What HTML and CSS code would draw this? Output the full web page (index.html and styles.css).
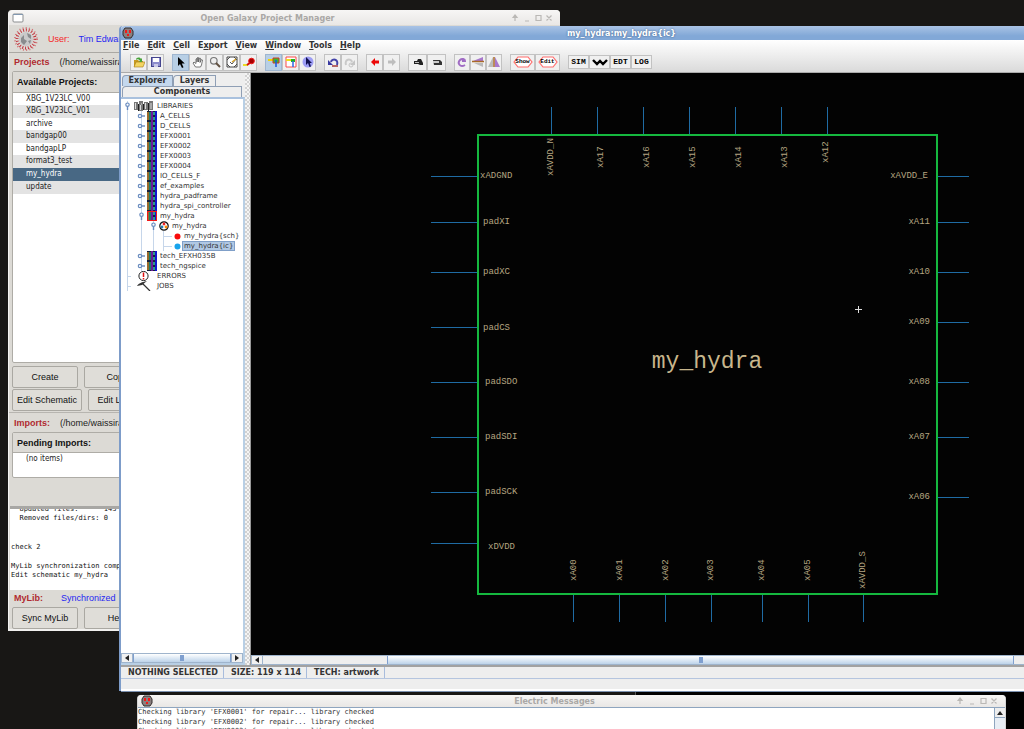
FILE: index.html
```html
<!DOCTYPE html>
<html lang="en">
<head>
<meta charset="utf-8">
<title>my_hydra:my_hydra{ic}</title>
<link rel="stylesheet" href="styles.css">
</head>
<body>
<svg class="defs" aria-hidden="true">
  <symbol id="books" viewBox="0 0 10 10"><path fill="#17203a" d="M0 0h10v10H0z"/><path fill="#9a6a2a" d="M0 1h2v8H0z"/><path fill="#1e7a6a" d="M2 1h2v8H2z"/><path fill="#6a1a9a" d="M4 0h2v10H4z"/><path fill="#2a9a8a" d="M6 1h2v3H6zM6 6h2v3H6z"/><path fill="#1414d0" d="M8 0h2v10H8z"/></symbol>
  <symbol id="shut" viewBox="0 0 8 8"><circle cx="3" cy="4" r="1.7" fill="#fff" stroke="#6a8cbf" stroke-width="1.2"/><path d="M5 4h3" stroke="#6a8cbf" stroke-width="1.4"/></symbol>
  <symbol id="open" viewBox="0 0 8 8"><circle cx="4.500" cy="2.700" r="1.700" fill="#fff" stroke="#6a8cbf" stroke-width="1.200"/><path d="M4.500 4.500V8" stroke="#6a8cbf" stroke-width="1.400"/></symbol>
  <symbol id="outlet" viewBox="0 0 12 12"><path d="M3 1h6l2 3v4L9 11H3L1 8V4z" fill="#8a7f7f" stroke="#332c2c"/><path d="M3 3h2v3H3zM7 3h2v3H7zM5 7h2v2H5z" fill="#f31818"/></symbol>
  <symbol id="controls" viewBox="0 0 44 10"><g fill="none" stroke="#bab8b5" stroke-width="1.200"><path d="M4 2v6M2 4.500l2-2.500 2 2.500zM14 8h4M25 2.500h5v5h-5zM35.500 2.500l5 5M40.500 2.500l-5 5"/></g></symbol>
  <symbol id="left" viewBox="0 0 8 8"><path d="M6 1v6L2 4z" fill="#222"/></symbol>
  <symbol id="right" viewBox="0 0 8 8"><path d="M2 1v6l4-3z" fill="#222"/></symbol>
  <symbol id="up" viewBox="0 0 8 8"><path d="M1 6h6L4 2z" fill="#222"/></symbol>
</svg>

<main class="desktop">
  <div class="screen-edge"></div>

  <section class="window manager" aria-label="Open Galaxy Project Manager">
    <header class="bar idle"><svg class="app-icon" viewBox="0 0 12 12"><rect x="1" y="2" width="10" height="8" rx="1" fill="#fff" stroke="#8b8d8f"/><path d="M1 2.500h10" stroke="#8298b0"/></svg><h1>Open Galaxy Project Manager</h1><svg class="controls"><use href="#controls"/></svg></header>
    <div class="user">
      <svg class="logo" viewBox="0 0 26 26"><g fill="none" stroke="#c0323c"><circle cx="13" cy="13" r="9" stroke-width="3" stroke-dasharray="1 1.800"/><circle cx="13" cy="13" r="11" stroke="#d27274" stroke-width="2" stroke-dasharray="1 2.200"/></g><circle cx="13" cy="13" r="7" fill="#c9c9c9"/><path d="M8 12l3-3v4l3 2-3 4-3-3zM14 7l4 2v4l-3-2zM15 15l3-1-1 4z" fill="#898b8d"/></svg>
      <span class="red">User:</span><span class="blue">Tim Edwards</span>
    </div>
    <div class="caption"><b class="brick">Projects</b><span>(/home/waissira)</span></div>
    <div class="listbox projects">
      <h2>Available Projects:</h2>
      <ul><li>XBG_1V23LC_V00</li><li>XBG_1V23LC_V01</li><li>archive</li><li>bandgap00</li><li>bandgapLP</li><li>format3_test</li><li class="chosen">my_hydra</li><li>update</li></ul>
    </div>
    <div class="buttons"><button class="std">Create</button><button class="std">Copy</button></div>
    <div class="buttons"><button>Edit Schematic</button><button>Edit Layout</button></div>
    <div class="caption ruled"><b class="brick">Imports:</b><span>(/home/waissira)</span></div>
    <div class="listbox imports">
      <h2>Pending Imports:</h2>
      <ul><li>(no items)</li></ul>
    </div>
    <div class="log"><p>  Updated files:      143</p><p>  Removed files/dirs: 0</p><p> </p><p> </p><p>check 2</p><p> </p><p>MyLib synchronization complete</p><p>Edit schematic my_hydra</p><p> </p></div>
    <div class="caption sync"><b class="brick">MyLib:</b><span class="blue">Synchronized</span></div>
    <div class="buttons"><button class="std">Sync MyLib</button><button class="std">Help</button></div>
  </section>

  <section class="window editor" aria-label="my_hydra:my_hydra{ic}">
    <header class="bar active"><svg class="app-icon"><use href="#outlet"/></svg><h1>my_hydra:my_hydra{ic}</h1></header>
    <div class="top">
      <nav class="menu"><button><u>F</u>ile</button><button><u>E</u>dit</button><button><u>C</u>ell</button><button>E<u>x</u>port</button><button><u>V</u>iew</button><button><u>W</u>indow</button><button><u>T</u>ools</button><button><u>H</u>elp</button></nav>
      <div class="toolbar" role="toolbar">
        <div class="group">
          <button aria-label="Open library"><svg viewBox="0 0 12 12"><path d="M1 4h4l1 1h4v6H1z" fill="#c79b22"/><path d="M1 11l2-5h9l-2 5z" fill="#f3d561" stroke="#a47a18" stroke-width=".600"/><path d="M3 4c0-3 4-3 5-1l1-1v4H6l1-1c-1-2-3-2-4-1z" fill="#49a33a"/></svg></button>
          <button aria-label="Save library"><svg viewBox="0 0 12 12"><rect x="1.500" y="1.500" width="9" height="9" fill="#8c8ccc" stroke="#44448e"/><path fill="#fff" d="M3 2h6v4H3z"/><path fill="#c9c9e8" d="M4 8h4v3H4z"/></svg></button>
        </div>
        <div class="group">
          <button class="on" aria-label="Select"><svg viewBox="0 0 12 12"><path d="M3 1v9l2-2 2 4 1.500-.800L6.800 7.500h3z"/></svg></button>
          <button aria-label="Pan"><svg viewBox="0 0 12 12"><path d="M3.500 11L1 7l1-1 2 1.500V3l1-.500V6l.500-4.500 1 .100V6l1-4 1 .300L8 6.500l1.500-3 1 .500-1 5-1 2z" fill="#fff" stroke="#555" stroke-width=".800"/></svg></button>
          <button aria-label="Zoom"><svg viewBox="0 0 12 12"><circle cx="4.800" cy="4.800" r="3.300" fill="#eee" stroke="#777" stroke-width="1.200"/><path d="M7 7l4 4" stroke="#605040" stroke-width="2"/></svg></button>
          <button aria-label="Outline edit"><svg viewBox="0 0 12 12"><path d="M1 1h10v10H1z" fill="#fff" stroke="#444"/><path d="M1 4l3-3M1 8l3 3M11 4L8 1M11 8l-3 3M4 6l2 2 4-5" fill="none" stroke="#444" stroke-width=".900"/><path d="M6 6l4-3" stroke="#d8a21e" stroke-width="1.200"/></svg></button>
          <button aria-label="Measure"><svg viewBox="0 0 12 12"><path d="M0 9h5" stroke="#e9dd28" stroke-width="2"/><path d="M4 9l4-3" stroke="#d41010" stroke-width="2"/><circle cx="8.500" cy="5" r="2.800" fill="#a60000" stroke="#f01515"/></svg></button>
        </div>
        <div class="group">
          <button class="on" aria-label="Select objects"><svg viewBox="0 0 12 12"><path d="M0 4h5" stroke="#f3d400" stroke-width="2"/><path d="M5 2h6v5H5z" fill="#37b837" stroke="#d43a20"/><path d="M8 4v7" stroke="#1958e0" stroke-width="1.500"/></svg></button>
          <button aria-label="Select area"><svg viewBox="0 0 12 12"><path d="M1 1h10v10H1z" fill="#fff" stroke="#fb4b4b"/><path d="M1 4h5" stroke="#ecdf18" stroke-width="2"/><path d="M6 3h4v3H6z" fill="#20b420"/><path d="M8 5v6" stroke="#3168e6" stroke-width="1.500"/></svg></button>
          <button aria-label="Special select"><svg viewBox="0 0 12 12"><circle cx="6" cy="6" r="5.500" fill="#9d9df4"/><path d="M4 1v8l2-2 1.500 4L9 10.500 7.800 7H10z" fill="#11114e"/></svg></button>
        </div>
        <div class="group">
          <button aria-label="Undo"><svg viewBox="0 0 12 12"><path d="M10 9c2-6-5-7-6-3" fill="none" stroke="#4444a8" stroke-width="2"/><path d="M1 4v5h5z" fill="#3838a0"/><path d="M5 10h6" stroke="#b05858" stroke-width="1.800"/></svg></button>
          <button aria-label="Redo"><svg viewBox="0 0 12 12"><path d="M2 9c-2-6 5-7 6-3" fill="none" stroke="#c9c9c9" stroke-width="2"/><path d="M11 4v5H6z" fill="#c4c4c4"/><circle cx="7" cy="9" r="2" fill="none" stroke="#c4c4c4"/></svg></button>
        </div>
        <div class="group">
          <button aria-label="Back"><svg viewBox="0 0 12 12"><path d="M2 6l4-4v2.500h4v3H6V10z" fill="#ec0808"/></svg></button>
          <button aria-label="Forward"><svg viewBox="0 0 12 12"><path d="M10 6L6 2v2.500H2v3h4V10z" fill="#bdbdbd"/></svg></button>
        </div>
        <div class="group pair">
          <button aria-label="Expand"><svg viewBox="0 0 12 12"><path d="M2 5h3l1-2h3l2 4v2H8L6 8H2z" fill="#222"/><path d="M3 6.500h4" stroke="#bbb"/></svg></button>
          <button aria-label="Collapse"><svg viewBox="0 0 12 12"><path d="M2 4h7l2 2v3H3z" fill="#333"/><path d="M2 5h6v2H2z" fill="#ccc"/></svg></button>
        </div>
        <div class="group slim">
          <button aria-label="Rotate"><svg viewBox="0 0 12 12"><path d="M9 9C4 12 1 7 4 4c2-2 5-1 5 1H6" fill="none" stroke="#a06cc4" stroke-width="2"/></svg></button>
          <button aria-label="Mirror vertically"><svg viewBox="0 0 12 12"><path d="M11 1v4H1z" fill="#a878cc"/><path d="M0 5.500h12" stroke="#a86a28" stroke-width="1.500"/><path d="M11 7v4L2 7z" fill="#bbb"/></svg></button>
          <button aria-label="Mirror horizontally"><svg viewBox="0 0 12 12"><path d="M5 1v10H0z" fill="#bbb"/><path d="M6 1v10" stroke="#a86a28" stroke-width="1.500"/><path d="M7 1l5 10H7z" fill="#a878cc"/></svg></button>
        </div>
        <div class="group tags">
          <button><svg viewBox="0 0 20 12"><path d="M1 6l4-5h10l4 5-4 5H5z" fill="#fff" stroke="#ff6d6d" stroke-width="1.200"/></svg><span>Show</span></button>
          <button><svg viewBox="0 0 20 12"><path d="M1 6l4-5h10l4 5-4 5H5z" fill="#fff" stroke="#ff6d6d" stroke-width="1.200"/></svg><span>Edit</span></button>
        </div>
        <div class="group words">
          <button>SIM</button>
          <button aria-label="Waveform"><svg viewBox="0 0 16 12"><path d="M1 4l4 4 3-3 3 3 4-4" fill="none" stroke="#000" stroke-width="2.400"/></svg></button>
          <button>EDT</button>
          <button>LOG</button>
        </div>
      </div>
    </div>
    <div class="work">
      <aside class="side">
        <div class="tabs">
          <button class="tab current">Explorer</button><button class="tab">Layers</button>
          <button class="tab wide">Components</button>
        </div>
        <div class="pane">
          <ul class="tree root">
            <li><div class="row"><svg class="knob"><use href="#open"/></svg><svg class="slot" viewBox="0 0 21 10"><path d="M1 1h4v8H1zM6 0h4v10H6zM11 1h4v8h-4zM16 0h4v9h-4z" fill="#777"/><path d="M2.500 2v6M8 3h1M7.500 4v5M12.500 2v6M18 2v6" stroke="#ddd"/><path d="M5.500 3v7M10.500 3v6M15.500 2v8" stroke="#222"/></svg><span>LIBRARIES</span></div>
              <ul class="tree libs">
                <li><div class="row"><svg class="knob"><use href="#shut"/></svg><svg class="ico"><use href="#books"/></svg><span>A_CELLS</span></div></li>
                <li><div class="row"><svg class="knob"><use href="#shut"/></svg><svg class="ico"><use href="#books"/></svg><span>D_CELLS</span></div></li>
                <li><div class="row"><svg class="knob"><use href="#shut"/></svg><svg class="ico"><use href="#books"/></svg><span>EFX0001</span></div></li>
                <li><div class="row"><svg class="knob"><use href="#shut"/></svg><svg class="ico"><use href="#books"/></svg><span>EFX0002</span></div></li>
                <li><div class="row"><svg class="knob"><use href="#shut"/></svg><svg class="ico"><use href="#books"/></svg><span>EFX0003</span></div></li>
                <li><div class="row"><svg class="knob"><use href="#shut"/></svg><svg class="ico"><use href="#books"/></svg><span>EFX0004</span></div></li>
                <li><div class="row"><svg class="knob"><use href="#shut"/></svg><svg class="ico"><use href="#books"/></svg><span>IO_CELLS_F</span></div></li>
                <li><div class="row"><svg class="knob"><use href="#shut"/></svg><svg class="ico"><use href="#books"/></svg><span>ef_examples</span></div></li>
                <li><div class="row"><svg class="knob"><use href="#shut"/></svg><svg class="ico"><use href="#books"/></svg><span>hydra_padframe</span></div></li>
                <li><div class="row"><svg class="knob"><use href="#shut"/></svg><svg class="ico"><use href="#books"/></svg><span>hydra_spi_controller</span></div></li>
                <li><div class="row"><svg class="knob"><use href="#open"/></svg><svg class="ico marked"><use href="#books"/></svg><span>my_hydra</span></div>
                  <ul class="tree cells">
                    <li><div class="row"><svg class="knob"><use href="#open"/></svg><svg class="ico" viewBox="0 0 10 10"><circle cx="5" cy="5" r="4.200" fill="#fff" stroke="#111" stroke-width="1.200"/><circle cx="5" cy="3" r="1.400" fill="#e22"/><circle cx="3" cy="6" r="1.400" fill="#27a"/><circle cx="7" cy="6" r="1.400" fill="#f80"/></svg><span>my_hydra</span></div>
                      <ul class="tree views">
                        <li><div class="row"><i class="stub"></i><svg class="dot" viewBox="0 0 7 7"><circle cx="3.500" cy="3.500" r="3" fill="#f80c0c"/></svg><span>my_hydra{sch}</span></div></li>
                        <li><div class="row"><i class="stub"></i><svg class="dot" viewBox="0 0 7 7"><circle cx="3.500" cy="3.500" r="3" fill="#18a4ec"/></svg><span class="picked">my_hydra{ic}</span></div></li>
                      </ul>
                    </li>
                  </ul>
                </li>
                <li><div class="row"><svg class="knob"><use href="#shut"/></svg><svg class="ico"><use href="#books"/></svg><span>tech_EFXH035B</span></div></li>
                <li><div class="row"><svg class="knob"><use href="#shut"/></svg><svg class="ico"><use href="#books"/></svg><span>tech_ngspice</span></div></li>
              </ul>
            </li>
            <li><div class="row"><i class="stub late"></i><svg class="slot" viewBox="0 0 21 10"><circle cx="10.500" cy="5" r="4.600" fill="#fff" stroke="#222"/><path d="M10.500 1.500v4.500M10.500 7v1.500" stroke="#e01010" stroke-width="1.500"/></svg><span>ERRORS</span></div></li>
            <li><div class="row"><i class="stub late"></i><svg class="slot" viewBox="0 0 21 10"><path d="M9 2l8 8" stroke="#333" stroke-width="1.200"/><path d="M4 5c1-2 4-4 10-5L9 4z" fill="#333"/></svg><span>JOBS</span></div></li>
          </ul>
          <div class="scroll"><button aria-label="Left"><svg><use href="#left"/></svg></button><div class="track"><div class="thumb"></div></div><button aria-label="Right"><svg><use href="#right"/></svg></button></div>
        </div>
      </aside>
      <div class="splitter"></div>
      <div class="view">
        <div class="canvas">
          <svg class="drawing" width="773" height="582" viewBox="251 73 773 582" role="img" aria-label="my_hydra icon">
            <path class="wire" d="M551.500 107v27M597.500 107v27M643.500 107v27M689.500 107v27M735.500 107v27M781.500 107v27M827.500 107v27M573.500 595v27M619.500 595v27M665.500 595v27M711.500 595v27M762.500 595v27M808.500 595v27M863.500 595v27M431 176.500h46M431 222.500h46M431 272.500h46M431 327.500h46M431 382.500h46M431 437.500h46M431 492.500h46M431 543.500h46M938 176.500h31M938 222.500h31M938 272.500h31M938 322.500h31M938 382.500h31M938 437.500h31M938 497.500h31"/>
            <rect class="frame" x="478" y="135" width="459" height="459"/>
            <g class="pin"><text x="480" y="178">xADGND</text><text x="483" y="224">padXI</text><text x="483" y="274">padXC</text><text x="483" y="330">padCS</text><text x="485" y="384">padSDO</text><text x="485" y="439">padSDI</text><text x="485" y="494">padSCK</text><text x="488" y="549">xDVDD</text></g>
            <g class="pin end"><text x="928" y="178">xAVDD_E</text><text x="930" y="224">xA11</text><text x="930" y="274">xA10</text><text x="930" y="324">xA09</text><text x="930" y="384">xA08</text><text x="930" y="439">xA07</text><text x="930" y="499">xA06</text></g>
            <g class="pin"><text transform="translate(553 176) rotate(-90)">xAVDD_N</text><text transform="translate(603 168) rotate(-90)">xA17</text><text transform="translate(649 168) rotate(-90)">xA16</text><text transform="translate(695 168) rotate(-90)">xA15</text><text transform="translate(741 168) rotate(-90)">xA14</text><text transform="translate(787 168) rotate(-90)">xA13</text><text transform="translate(828 163) rotate(-90)">xA12</text>
            <text transform="translate(576 581) rotate(-90)">xA00</text><text transform="translate(622 581) rotate(-90)">xA01</text><text transform="translate(668 581) rotate(-90)">xA02</text><text transform="translate(713 581) rotate(-90)">xA03</text><text transform="translate(764 581) rotate(-90)">xA04</text><text transform="translate(810 581) rotate(-90)">xA05</text><text transform="translate(865 589) rotate(-90)">xAVDD_S</text></g>
            <text class="cell-name" x="707" y="368">my_hydra</text>
            <path class="cross" d="M855 309.500h7M858.500 306v7"/>
          </svg>
        </div>
        <div class="scroll large"><button aria-label="Left"><svg><use href="#left"/></svg></button><div class="track"><div class="thumb"></div></div><button aria-label="Right"><svg><use href="#right"/></svg></button></div>
      </div>
    </div>
    <footer class="status"><span>NOTHING SELECTED</span><span>SIZE: 119 x 114</span><span>TECH: artwork</span><span class="rest"></span></footer>
    <div class="foot"></div>
  </section>

  <section class="window messages" aria-label="Electric Messages">
    <header class="bar idle"><svg class="app-icon"><use href="#outlet"/></svg><h1>Electric Messages</h1><svg class="controls"><use href="#controls"/></svg></header>
    <div class="output"><div class="lines"><p>Checking library 'EFX0001' for repair... library checked</p><p>Checking library 'EFX0002' for repair... library checked</p><p>Checking library 'EFX0003' for repair... library checked</p></div><div class="vscroll"><button aria-label="Up"><svg><use href="#up"/></svg></button></div></div>
  </section>
</main>
</body>
</html>
```

FILE: styles.css
```css
* { box-sizing: border-box; }
html, body { height: 100%; }
body { margin: 0; overflow: hidden; background: #181715; color: #222; font: 9px/12px "Liberation Sans", Arial, sans-serif; }
h1, h2, p, ul { margin: 0; padding: 0; list-style: none; }
button { margin: 0; padding: 0; font: inherit; color: inherit; }
.defs { display: none; }
.desktop { position: relative; height: 100%; overflow: hidden; }
.screen-edge { position: absolute; left: 635px; right: 0; bottom: 0; height: 39px; background: #000; border-left: 1px solid #555; }
.window { position: absolute; display: flex; flex-direction: column; }

/* title bars */
.bar { display: flex; align-items: center; height: 15px; padding: 0 5px 0 3px; border-radius: 4px 4px 0 0; flex: none; }
.bar h1 { flex: 1; padding-top: 2px; text-align: center; font: bold 8px/12px "DejaVu Sans", sans-serif; }
.app-icon { width: 12px; height: 12px; }
.bar.idle { background: linear-gradient(#f7f6f5, #e9e7e5); color: #aaa8a6; }
.controls { width: 44px; height: 10px; }
.bar.active { height: 14px; padding: 0 16px 0 1px; background: linear-gradient(#a9c3e5, #82a8d7 70%); color: #fff; text-shadow: 0 0 2px #35557f; }

/* project manager */
.manager { left: 8px; top: 10px; width: 552px; background: #dcdad5; border-left: 1px solid #f4f3f1; border-bottom: 2px solid #f1f0ee; border-radius: 4px 4px 0 0; height: 621px; }
.user { display: flex; align-items: center; gap: 9px; height: 28px; padding: 0 4px; border-bottom: 1px solid #aaa8a3; }
.logo { width: 26px; height: 26px; }
.red { color: #f52626; }
.blue { color: #2626f2; }
.brick { color: #b02a30; }
.caption { display: flex; align-items: center; gap: 10px; height: 18px; padding: 0 5px; }
.ruled { margin-top: 1px; border-top: 1px solid #b7b5b0; height: 20px; }
.sync { gap: 18px; height: 16px; }
.listbox { margin-left: 3px; border: 1px solid #aeaca6; border-radius: 2px; background: #fff; }
.listbox h2 { height: 20px; padding-left: 4px; background: #dcdad5; border-bottom: 1px solid #aeaca6; font: bold 9px/21px "Liberation Sans", sans-serif; color: #111; }
.listbox li { height: 12px; padding-left: 13px; font: 8px/12px "DejaVu Sans Condensed", "DejaVu Sans", sans-serif; }
.listbox li:nth-child(even) { height: 13px; background: #e3e3e3; }
.projects { height: 292px; }
.projects h2 { height: 21px; }
.imports { height: 46px; }
.listbox li.chosen { height: 13px; background: #486884; color: #fff; }
.buttons { display: flex; gap: 6px; padding: 1px 3px 0; }
.projects + .buttons { margin-top: 2px; }
.buttons button { height: 22px; padding: 0 4px; background: #dfddd8; border: 1px solid #aaa8a2; border-radius: 2px; color: #111; min-width: 64px; }
.buttons .std { min-width: 66px; }
.log { display: flex; flex-direction: column; justify-content: flex-end; height: 84px; margin: 28px 0 0 1px; padding-left: 1px; overflow: hidden; background: #fff; border-top: 3px solid #a8a7a4; font: 7px/9px "DejaVu Sans Mono", monospace; color: #111; white-space: pre; }
.log p { flex: none; height: 9px; }
.log p:nth-child(even) { height: 10px; }

/* editor window */
.editor { left: 119px; right: -101px; top: 26px; bottom: 38px; background: #eee; border-left: 2px solid #7d9cc9; border-radius: 4px 0 0 0; font: bold 8px/10px "DejaVu Sans", sans-serif; color: #333; }
.top { background: linear-gradient(#fff, #dadada); border-bottom: 1px solid #aaa; height: 33px; flex: none; }
.menu { display: flex; gap: 8px; padding: 0 2px; height: 12px; }
.menu button { height: 11px; border: 0; background: none; line-height: 10px; }
.toolbar { display: flex; gap: 8px; align-items: center; height: 20px; padding-left: 9px; }
.group { display: flex; align-items: center; }
.toolbar button { width: 17px; height: 17px; display: grid; place-items: center; background: #f0f0f0; border: 1px solid #c2c2c2; }
.toolbar button svg { width: 12px; height: 12px; }
.toolbar button.on { background: #b8cfe5; border-color: #9fb6d0; }
.pair button { width: 19px; }
.slim button { width: 16px; }
.tags button { width: 25px; }
.tags svg, .tags span { grid-area: 1 / 1; }
.toolbar .tags svg { width: 20px; }
.tags span { font: bold 6px/8px "Liberation Mono", monospace; color: #000; }
.toolbar .words button { width: 21px; height: 14px; font: bold 8px/10px "Liberation Mono", monospace; color: #000; }
.toolbar .words svg { width: 16px; }

.work { display: flex; flex: 1; min-height: 0; }
.side { width: 124px; flex: none; display: flex; flex-direction: column; padding-top: 2px; }
.tabs { display: flex; flex-wrap: wrap; padding-left: 1px; }
.tab { height: 11px; width: 51px; line-height: 10px; background: #eee; border: 1px solid #8f9fb5; border-bottom: 0; border-top-left-radius: 4px; }
.tab + .tab { width: 43px; }
.tab.current { background: #c4d8ee; }
.tabs .tab.wide { width: 120px; }
.pane { flex: 1; display: flex; flex-direction: column; border: 2px solid #b8cfe5; border-left: 0; border-top-color: #a9c1de; background: #fff; padding-top: 2px; }
.tree { font: 7px/10px "DejaVu Sans", sans-serif; color: #333; }
.tree.root { margin-left: 6px; border-left: 1px solid #c6d6ea; }
.tree .tree { border-left: 1px solid #c6d6ea; }
.libs { margin-left: 13px; }
.cells { margin-left: 11px; }
.tree .views { margin-left: 9px; }
.row { display: flex; align-items: center; gap: 2px; height: 10px; margin-left: -5px; white-space: nowrap; }
.row span { padding-left: 1px; }
.knob { width: 8px; height: 8px; flex: none; }
.slot { width: 21px; height: 10px; flex: none; }
.ico { width: 10px; height: 10px; flex: none; }
.marked { outline: 1px solid #f01818; outline-offset: -1px; }
.dot { width: 7px; height: 7px; flex: none; }
.stub { width: 8px; border-top: 1px solid #c6d6ea; }
.late { width: 4px; margin-left: 4px; }
.views .row { margin-left: 0; }
.row .picked { background: #b0c8e4; border: 1px solid #7f9fc8; line-height: 8px; padding: 0 1px; margin-left: -1px; }
.splitter { width: 6px; flex: none; background: repeating-conic-gradient(#d2d2d2 0 25%, #f4f4f4 0 50%) 0 0 / 4px 4px; border-right: 1px solid #999; }
.view { flex: 1; min-width: 0; display: flex; flex-direction: column; }
.canvas { flex: 1; min-height: 0; overflow: hidden; background: #030303; }
.drawing { display: block; }
.wire { fill: none; stroke: #1f6ba3; stroke-width: 1; }
.frame { fill: none; stroke: #15b83f; stroke-width: 2; }
.pin { font: 9px "Liberation Mono", monospace; fill: #b5a581; }
.end { text-anchor: end; }
.cell-name { font: 23px "Liberation Mono", monospace; fill: #c8b68c; text-anchor: middle; }
.cross { stroke: #ddd; }

.scroll { display: flex; flex: none; height: 10px; border: 1px solid #9fb4cc; background: #eee; }
.pane .scroll { margin-top: auto; }
.scroll button { width: 10px; border: 0; background: #f1f1f1; }
.scroll button svg, .vscroll button svg { display: block; width: 8px; height: 8px; margin: 0 auto; }
.track { flex: 1; display: flex; border: 0 solid #9fb4cc; border-width: 0 1px; }
.thumb { flex: 1; background: linear-gradient(90deg, #7f9fcf 4px, #7f9fcf 0) center / 4px 6px no-repeat, linear-gradient(#fff, #bdd3ea); border: 0 solid #7f9fcf; border-width: 0 1px; }
.large .thumb { margin: 0 99px 0 124px; }
.status { display: flex; height: 14px; flex: none; border-top: 2px solid #a2a2a2; border-bottom: 1px solid #b5c5df; line-height: 11px; }
.status span { padding: 0 5px 0 7px; border-right: 1px solid #a8bcdc; white-space: nowrap; }
.status .rest { flex: 1; }
.foot { height: 12px; flex: none; border-bottom: 2px solid #fff; box-shadow: 0 1px #7d92b0; }

/* messages */
.messages { left: 137px; right: 18px; top: 695px; height: 120px; border: 1px solid #d5d5d5; border-top: 0; border-radius: 4px 4px 0 0; background: #fff; }
.messages .bar { height: 13px; border-bottom: 1px solid #8ea5bf; }
.output { display: flex; flex: 1; }
.lines { flex: 1; font: 7px/9px "DejaVu Sans Mono", monospace; color: #333; }
.lines p:nth-child(even) { line-height: 10px; }
.vscroll { width: 11px; border-left: 1px solid #8ea5bf; background: #e8eef5; }
.vscroll button { width: 100%; height: 10px; border: 0; border-bottom: 1px solid #8ea5bf; display: block; background: #eee; }
```
